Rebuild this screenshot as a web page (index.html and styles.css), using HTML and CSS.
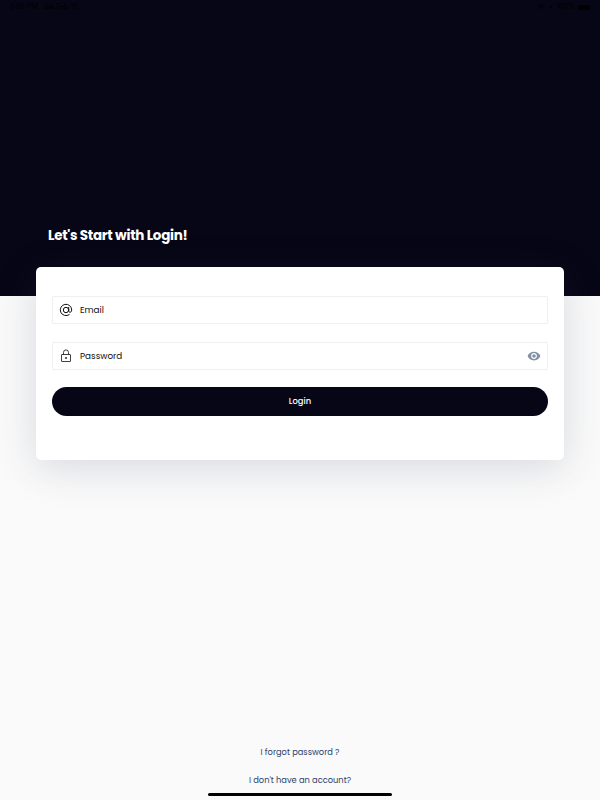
FILE: index.html
```html
<!DOCTYPE html>
<html lang="en">
<head>
    <meta charset="UTF-8">
    <meta name="viewport" content="width=device-width, initial-scale=1.0">
    <title>Login</title>
    <link rel="stylesheet" href="styles.css">
</head>
<body>
    <div class="hero">
        <div class="status-bar">
            <div class="status-left">
                <span>6:56 PM</span>
                <span>Sat Feb 15</span>
            </div>
            <div class="status-right">
                <svg width="8" height="6" viewBox="0 0 16 12" fill="none" stroke="currentColor" stroke-width="2">
                    <path d="M1 4.5a10 10 0 0 1 14 0M3.8 7.5a6 6 0 0 1 8.4 0"/>
                    <path d="M6 9.5a3 3 0 0 1 4 0L8 12z" fill="currentColor" stroke="none"/>
                </svg>
                <svg width="5" height="5" viewBox="0 0 10 10" fill="currentColor">
                    <path d="M10 0L0 5h5v5z"/>
                </svg>
                <span class="battery-text">100%</span>
                <span class="battery"></span>
            </div>
        </div>
        <h1 class="title">Let's Start with Login!</h1>
    </div>

    <form class="login-card">
        <label class="field">
            <svg class="field-icon" width="14" height="14" viewBox="0 0 14 14" fill="none" stroke="currentColor" stroke-linecap="round">
                <circle cx="7" cy="7" r="2.7"/>
                <path d="M9.7 4.4v3.3c0 2.4 3 2 3-.7A5.7 5.7 0 1 0 10.2 11.7"/>
            </svg>
            <span class="field-text">Email</span>
        </label>
        <label class="field">
            <svg class="field-icon" width="14" height="14" viewBox="0 0 14 14" fill="none" stroke="currentColor" stroke-width="0.8">
                <rect x="2.5" y="5.5" width="9" height="7" rx="0.4"/>
                <path d="M4.5 5.5V3.4a2.5 2.5 0 0 1 5 0v2.1"/>
                <circle cx="7" cy="9" r="0.9" fill="currentColor" stroke="none"/>
            </svg>
            <span class="field-text">Password</span>
            <svg class="eye-icon" width="14" height="14" viewBox="0 0 24 24" fill="currentColor">
                <path d="M12 4.5C7 4.5 2.73 7.61 1 12c1.73 4.39 6 7.5 11 7.5s9.27-3.11 11-7.5c-1.73-4.39-6-7.5-11-7.5zM12 17c-2.76 0-5-2.24-5-5s2.24-5 5-5 5 2.24 5 5-2.24 5-5 5zm0-8c-1.66 0-3 1.34-3 3s1.34 3 3 3 3-1.34 3-3-1.34-3-3-3z"/>
            </svg>
        </label>
        <button class="login-button" type="button">Login</button>
    </form>

    <div class="links">
        <a class="link">I forgot password ?</a>
        <a class="link">I don't have an account?</a>
    </div>
    <div class="home-indicator"></div>
</body>
</html>
```

FILE: styles.css
```css
* {
    margin: 0;
    padding: 0;
    box-sizing: border-box;
}

body {
    font-family: Poppins, Inter, sans-serif;
    height: 800px;
    display: flex;
    flex-direction: column;
    background: #fafafa;
    overflow: hidden;
}

.hero {
    height: 296px;
    flex-shrink: 0;
    background: #070616;
}

.status-bar {
    display: flex;
    justify-content: space-between;
    align-items: center;
    height: 14px;
    padding: 0 10px;
    font-family: Inter, sans-serif;
    font-size: 7px;
    line-height: 14px;
    color: #000;
}

.status-left,
.status-right {
    display: flex;
    align-items: center;
}

.status-left {
    gap: 6px;
}

.status-right {
    gap: 3px;
}

.battery {
    width: 12px;
    height: 5px;
    border-radius: 1.5px;
    background: #000;
}

.title {
    margin: 212px 0 0 48px;
    font-size: 13.5px;
    font-weight: 700;
    line-height: 20px;
    letter-spacing: -0.3px;
    color: #fff;
}

.login-card {
    position: relative;
    height: 193.5px;
    flex-shrink: 0;
    margin: -29.5px 36px 0;
    padding: 29.5px 16px 0;
    background: #fff;
    border-radius: 5px;
    box-shadow: 0 8px 40px rgba(45, 60, 90, 0.17);
}

.field {
    display: flex;
    align-items: center;
    height: 28px;
    margin-bottom: 18px;
    padding: 0 6px;
    border: 1px solid #f0f0f1;
    border-radius: 1px;
    color: #111;
}

.field-icon {
    margin-right: 7px;
}

.field-text {
    font-size: 8.8px;
    line-height: 14px;
}

.eye-icon {
    margin-left: auto;
    color: #8090a5;
}

.login-button {
    display: block;
    width: 100%;
    height: 29px;
    margin-top: -1px;
    border: none;
    border-radius: 15px;
    background: #070616;
    color: #fff;
    font-family: inherit;
    font-size: 8.4px;
    font-weight: 500;
}

.links {
    display: flex;
    flex-direction: column;
    align-items: center;
    gap: 14px;
    margin-top: auto;
}

.link {
    font-size: 8.3px;
    line-height: 14px;
    color: #2c416b;
}

.home-indicator {
    width: 184px;
    height: 3px;
    flex-shrink: 0;
    margin: 6px auto 4.5px;
    border-radius: 2px;
    background: #000;
}
```
